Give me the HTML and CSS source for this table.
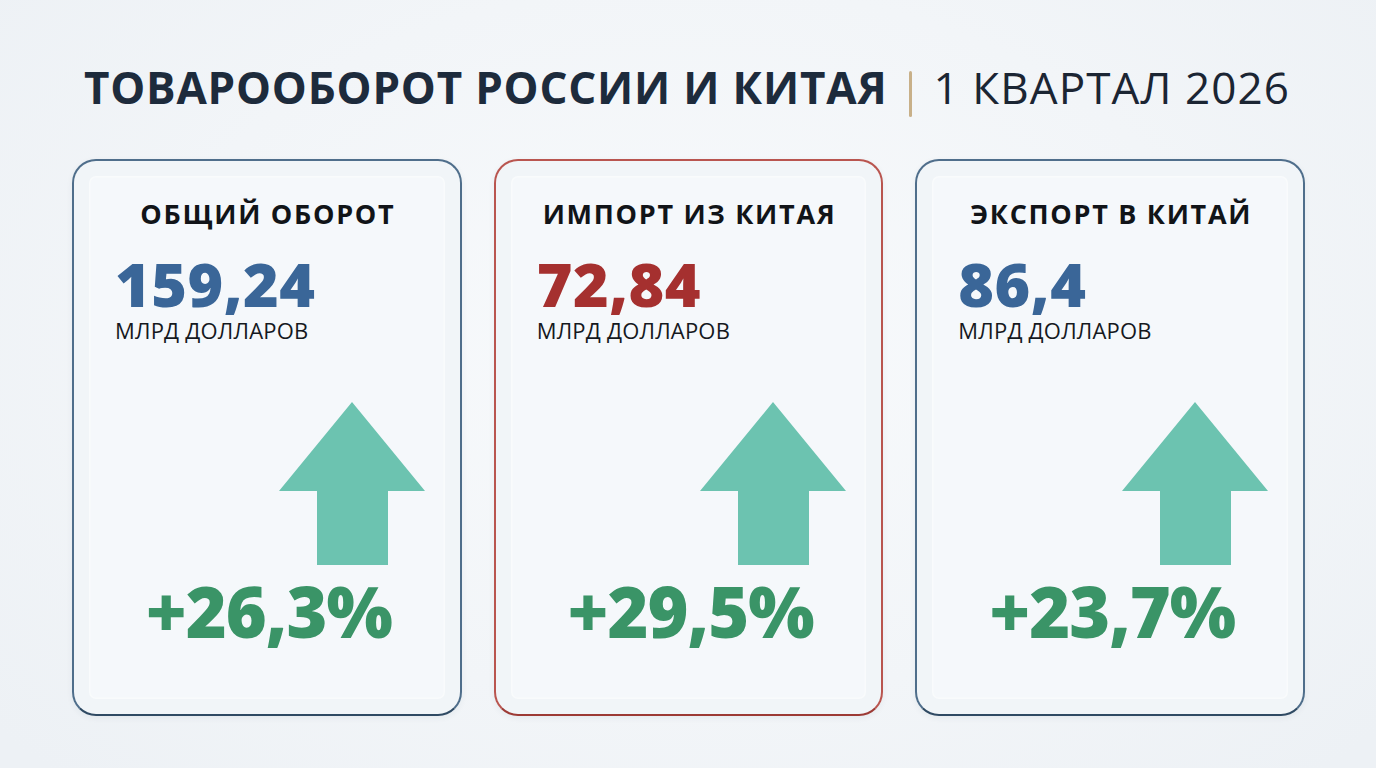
FILE: index.html
```html
<!DOCTYPE html>
<html lang="ru">
<head>
<meta charset="utf-8">
<title>Товарооборот России и Китая</title>
<link rel="stylesheet" href="styles.css">
</head>
<body>
<div class="page">
  <header class="title-row">
    <h1 class="title-main">ТОВАРООБОРОТ РОССИИ И КИТАЯ</h1>
    <span class="title-sep"></span>
    <span class="title-sub">1 КВАРТАЛ 2026</span>
  </header>
  <main class="cards">
    <section class="card card-blue">
      <h2 class="card-head">ОБЩИЙ ОБОРОТ</h2>
      <div class="card-num num-blue">159,24</div>
      <div class="card-unit">МЛРД ДОЛЛАРОВ</div>
      <svg class="arrow" viewBox="0 0 146 163" width="146" height="163"><polygon points="73,0 146,89 109,89 109,163 38,163 38,89 0,89"/></svg>
      <div class="card-pct">+26,3%</div>
    </section>
    <section class="card card-red">
      <h2 class="card-head">ИМПОРТ ИЗ КИТАЯ</h2>
      <div class="card-num num-red">72,84</div>
      <div class="card-unit">МЛРД ДОЛЛАРОВ</div>
      <svg class="arrow" viewBox="0 0 146 163" width="146" height="163"><polygon points="73,0 146,89 109,89 109,163 38,163 38,89 0,89"/></svg>
      <div class="card-pct">+29,5%</div>
    </section>
    <section class="card card-blue">
      <h2 class="card-head">ЭКСПОРТ В КИТАЙ</h2>
      <div class="card-num num-blue">86,4</div>
      <div class="card-unit">МЛРД ДОЛЛАРОВ</div>
      <svg class="arrow" viewBox="0 0 146 163" width="146" height="163"><polygon points="73,0 146,89 109,89 109,163 38,163 38,89 0,89"/></svg>
      <div class="card-pct">+23,7%</div>
    </section>
  </main>
</div>
</body>
</html>
```
FILE: styles.css
```css
html, body {
  margin: 0;
  padding: 0;
}
body {
  width: 1376px;
  height: 768px;
  overflow: hidden;
  background: radial-gradient(ellipse 900px 600px at 50% 45%, #f8fafc 0%, #f2f5f8 60%, #edf1f5 100%);
  font-family: "Open Sans", "Liberation Sans", sans-serif;
}
.page {
  display: flex;
  flex-direction: column;
  padding-top: 65px;
}
.title-row {
  display: flex;
  align-items: flex-start;
  height: 44px;
  padding-left: 84px;
  color: #1d2b3c;
}
.title-main {
  margin: 0;
  font-size: 44px;
  line-height: 44px;
  font-weight: 700;
  letter-spacing: 0.8px;
}
.title-sep {
  flex: none;
  width: 3px;
  height: 46px;
  margin: 6px 21px 0 22px;
  background: #c8b089;
  border-radius: 2px;
}
.title-sub {
  font-size: 44px;
  line-height: 44px;
  font-weight: 400;
  letter-spacing: 1.1px;
  color: #1b2533;
}
.cards {
  display: flex;
  gap: 32px;
  padding: 0 71px 0 72px;
  margin-top: 50px;
}
.card {
  flex: 1;
  height: 557px;
  box-sizing: border-box;
  border: 2px solid #4f6e8b;
  border-bottom-color: #2f4a63;
  border-radius: 24px;
  background: #f5f8fb;
  box-shadow: inset 0 0 0 15px #f1f5f8, inset 0 0 0 16.5px #f9fbfc, 0 2px 6px rgba(40, 60, 90, 0.06);
  display: flex;
  flex-direction: column;
  padding: 40px 35px 0 41px;
}
.card-red {
  border-color: #b9554f;
  border-bottom-color: #9c3a35;
}
.card-head {
  margin: 0;
  text-align: center;
  font-size: 27px;
  line-height: 26px;
  font-weight: 700;
  letter-spacing: 1.7px;
  color: #111418;
  padding-right: 4px;
}
.card-num {
  margin-top: 26px;
  font-size: 61px;
  line-height: 61px;
  font-weight: 800;
  letter-spacing: 0.5px;
}
.num-blue { color: #3a6698; }
.num-red { color: #a5302f; }
.card-unit {
  margin-top: 5px;
  font-size: 22px;
  line-height: 22px;
  font-weight: 500;
  color: #15191e;
  letter-spacing: 0.2px;
}
.arrow {
  display: block;
  align-self: flex-end;
  margin-top: 61px;
  fill: #6cc3b0;
}
.card-pct {
  margin-top: 11px;
  text-align: center;
  font-size: 70px;
  line-height: 70px;
  font-weight: 800;
  letter-spacing: -1px;
  color: #3a9467;
  padding-right: 2px;
}
```
